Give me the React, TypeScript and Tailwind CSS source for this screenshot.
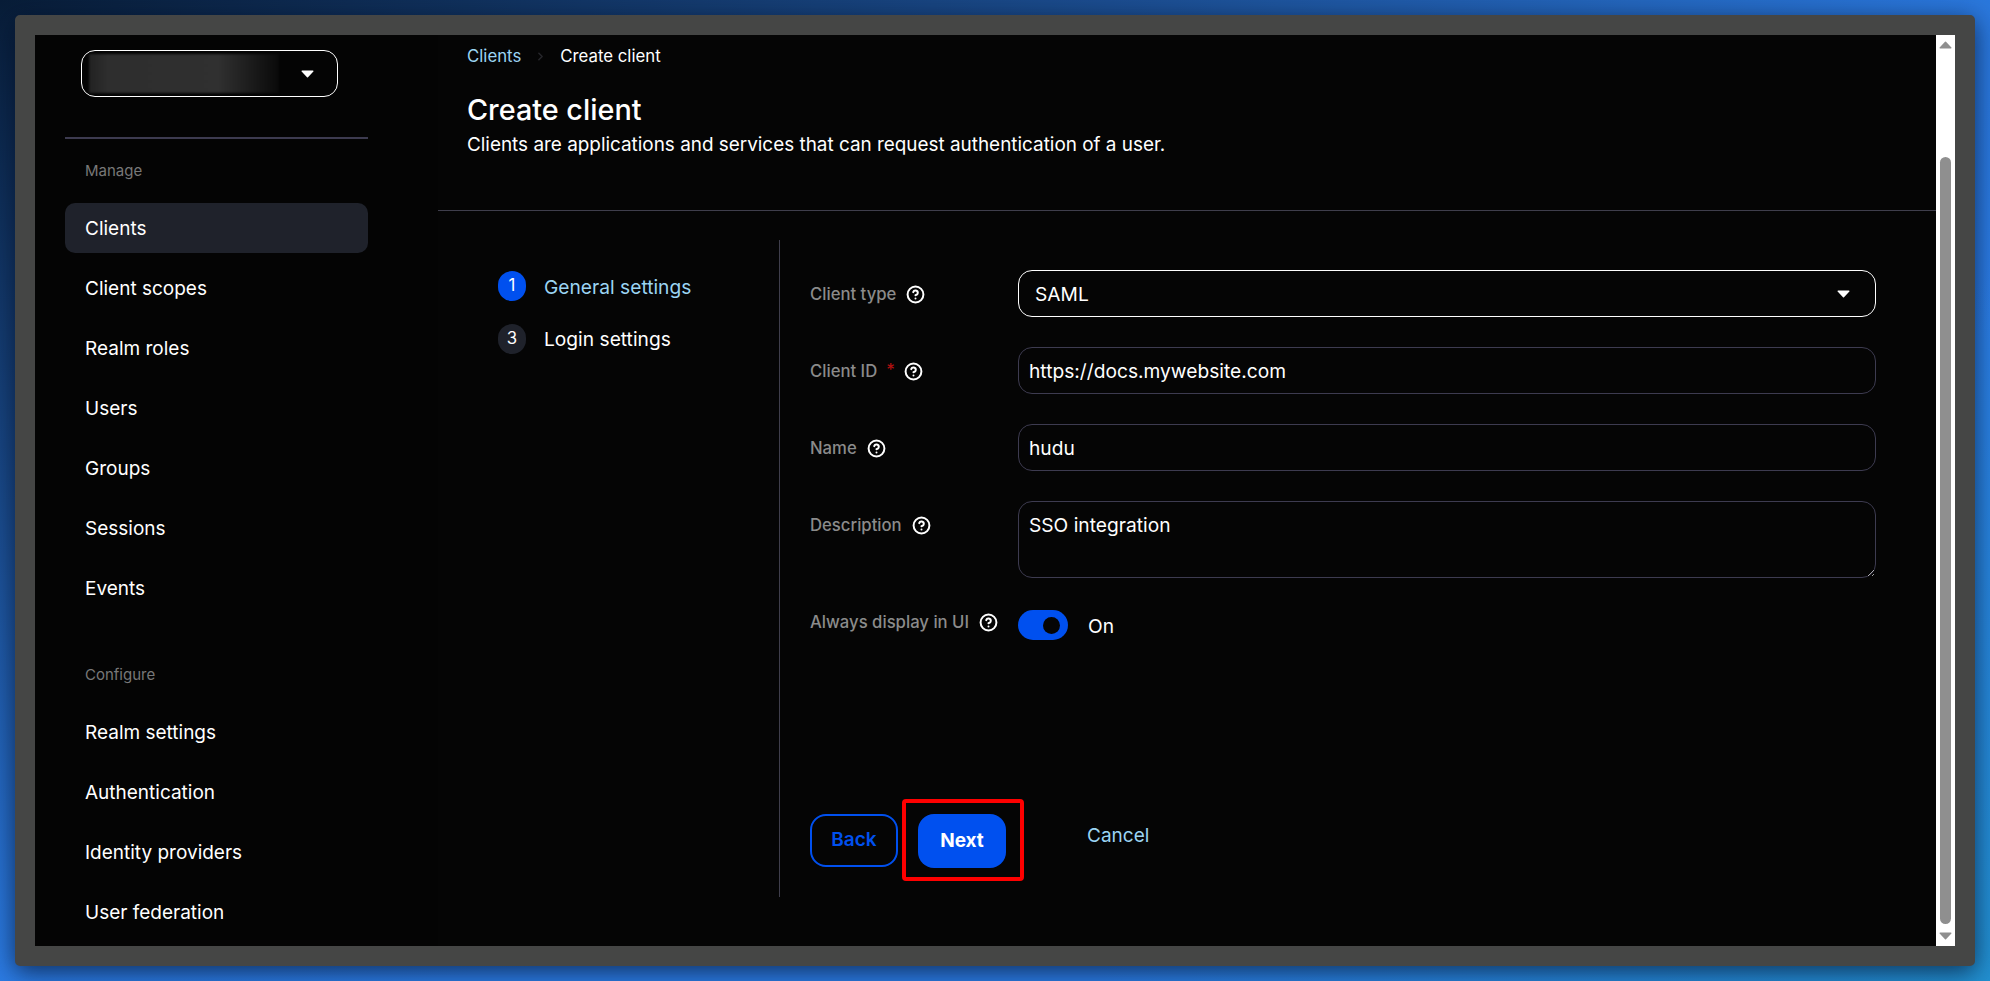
import { CircleHelp, ChevronRight } from "lucide-react";

const font = { fontFamily: "Inter, 'Noto Sans', sans-serif" };

function Help() {
  return <CircleHelp size={19} strokeWidth={2.5} className="text-white shrink-0" />;
}

function Caret({ cls }: { cls: string }) {
  return (
    <svg width="13" height="8" viewBox="0 0 13 8" className={cls}>
      <path d="M1 0.5h11a.6.6 0 0 1 .4 1L7 7.2a.7.7 0 0 1-1 0L.6 1.5A.6.6 0 0 1 1 .5z" fill="currentColor" />
    </svg>
  );
}

function NavItem({ label, active }: { label: string; active?: boolean }) {
  return (
    <div className={`h-[50px] flex items-center pl-[20px] pt-[2px] rounded-[10px] text-[19px] text-white ${active ? "bg-[#1f222b]" : ""}`}>
      {label}
    </div>
  );
}

function Row({ label, children, req, labelPt = "pt-[13px]" }: { label: string; children: React.ReactNode; req?: boolean; labelPt?: string }) {
  return (
    <div className="flex items-start">
      <div className={`w-[208px] shrink-0 flex items-center gap-[10px] text-[16.7px] font-medium text-[#8b8b8b] leading-[22px] ${labelPt}`}>
        <span>{label}</span>
        {req && <span className="text-[#b01010] -ml-[1px] -mr-[1px] -mt-[3px]">*</span>}
        <Help />
      </div>
      {children}
    </div>
  );
}

const inputCls =
  "w-[858px] h-[47px] bg-transparent border border-[#3d3b50] rounded-[14px] px-[10px] pt-[1px] text-[19.2px] text-white outline-none";

export default function App() {
  return (
    <div
      style={font}
      className="w-[1990px] h-[981px] overflow-hidden p-[15px] bg-[radial-gradient(ellipse_900px_700px_at_100%_100%,#2290d0_0%,rgba(34,144,208,0)_100%),radial-gradient(ellipse_2100px_1000px_at_0%_0%,#081d38_0%,#1a4a8a_50%,#2c7de6_100%)]"
    >
      <div className="w-[1960px] h-[951px] border-[20px] border-[#454645] rounded-[5px] bg-[#050505] flex shadow-[0_6px_24px_rgba(4,16,40,0.7)]">
        <aside className="w-[403px] shrink-0 h-[911px] overflow-hidden pl-[30px] pr-[70px] pt-[15px] bg-[#040404]">
          <div className="ml-[16px] w-[257px] h-[47px] border border-white rounded-[14px] flex items-center relative pl-[7px]">
            <div className="w-[190px] h-[39px] bg-[linear-gradient(90deg,#222222_0%,#2e2e2e_10%,#303030_68%,#0a0a0a_100%)] blur-[1px]" />
            <Caret cls="absolute left-[219px] top-[19px] text-white" />
          </div>
          <div className="h-[2px] mt-[40px] bg-[#3d3b50]" />
          <div className="ml-[20px] mt-[21px] text-[15px] leading-[22px] text-[#787878]">Manage</div>
          <div className="mt-[21px] flex flex-col gap-[10px]">
            <NavItem label="Clients" active />
            <NavItem label="Client scopes" />
            <NavItem label="Realm roles" />
            <NavItem label="Users" />
            <NavItem label="Groups" />
            <NavItem label="Sessions" />
            <NavItem label="Events" />
          </div>
          <div className="ml-[20px] mt-[51px] text-[15px] leading-[22px] text-[#787878]">Configure</div>
          <div className="mt-[21px] flex flex-col gap-[10px]">
            <NavItem label="Realm settings" />
            <NavItem label="Authentication" />
            <NavItem label="Identity providers" />
            <NavItem label="User federation" />
          </div>
        </aside>

        <main className="flex-1 h-[911px] overflow-hidden bg-[#050505] text-white">
          <div className="pl-[29px] pt-[10px] flex items-center h-[33px] text-[16.8px]">
            <span className="text-[#9bd4f3]">Clients</span>
            <ChevronRight size={13} strokeWidth={3} className="mx-[13px] text-[#26262a]" />
            <span>Create client</span>
          </div>
          <h1 className="pl-[29px] mt-[22px] text-[28.8px] leading-[40px] font-medium">Create client</h1>
          <p className="pl-[29px] mt-[1px] text-[18.9px] leading-[28px]">
            Clients are applications and services that can request authentication of a user.
          </p>
          <div className="h-px mt-[51px] bg-[#3f3e4c]" />

          <div className="mt-[29px] flex h-[657px]">
            <div className="w-[342px] shrink-0 border-r border-[#3f3e4c] pl-[60px] pt-[31px]">
              <div className="flex items-center gap-[16px] h-[30px]">
                <span className="w-[28px] h-[30px] rounded-full bg-[#0050ef] flex items-center justify-center text-[16.8px]">1</span>
                <span className="text-[19.2px] text-[#9bd4f3] ml-[2px] mt-[3px]">General settings</span>
              </div>
              <div className="flex items-center gap-[16px] h-[30px] mt-[23px]">
                <span className="w-[28px] h-[30px] rounded-full bg-[#1f222b] flex items-center justify-center text-[16.8px]">3</span>
                <span className="text-[19.2px] ml-[2px] mt-[1px]">Login settings</span>
              </div>
            </div>

            <div className="pl-[30px] pt-[30px] flex flex-col">
              <div className="flex flex-col gap-[30px]">
                <Row label="Client type">
                  <div className="w-[858px] h-[47px] border border-white rounded-[14px] pl-[16px] pr-[25px] pt-[1px] flex items-center justify-between text-[19.2px]">
                    <span>SAML</span>
                    <Caret cls="text-white" />
                  </div>
                </Row>
                <Row label="Client ID" req>
                  <input readOnly value="https://docs.mywebsite.com" className={inputCls} />
                </Row>
                <Row label="Name">
                  <input readOnly value="hudu" className={inputCls} />
                </Row>
                <Row label="Description">
                  <textarea
                    readOnly
                    value="SSO integration"
                    className="w-[858px] h-[77px] bg-transparent border border-[#3d3b50] rounded-[14px] px-[10px] py-[9px] text-[19.2px] leading-[28px] text-white outline-none"
                  />
                </Row>
              </div>
              <div className="mt-[32px]">
                <Row label="Always display in UI" labelPt="pt-[1px]">
                  <div className="flex items-center">
                    <div className="w-[50px] h-[30px] rounded-full bg-[#0050ef] flex items-center justify-end pr-[8px]">
                      <span className="w-[17px] h-[17px] rounded-full bg-[#050505]" />
                    </div>
                    <span className="ml-[20px] text-[19.2px] mt-[2px]">On</span>
                  </div>
                </Row>
              </div>
              <div className="mt-[173px] flex items-start">
                <button className="w-[88px] h-[53px] border-2 border-[#0050ef] rounded-[16px] text-[19px] font-semibold text-[#0050ef]">Back</button>
                <div className="relative ml-[20px]">
                  <button className="w-[88px] h-[54px] bg-[#0050ef] rounded-[16px] text-[19px] font-bold text-white">Next</button>
                  <div className="absolute -left-[16px] -right-[18px] -top-[15px] -bottom-[13px] border-[4px] border-[#fe0000] rounded-[4px]" />
                </div>
                <span className="ml-[81px] mt-[9px] text-[19px] leading-[26px] text-[#9bd4f3]">Cancel</span>
              </div>
            </div>
          </div>
        </main>

        <div className="w-[19px] shrink-0 h-[911px] bg-white flex flex-col items-center pt-[6px] text-[#8f8f8f]">
          <Caret cls="rotate-180 text-[#8f8f8f]" />
          <div className="w-[11px] h-[767px] mt-[108px] rounded-[6px] bg-[#8f8f8f]" />
          <Caret cls="mt-[8px] text-[#8f8f8f]" />
        </div>
      </div>
    </div>
  );
}
